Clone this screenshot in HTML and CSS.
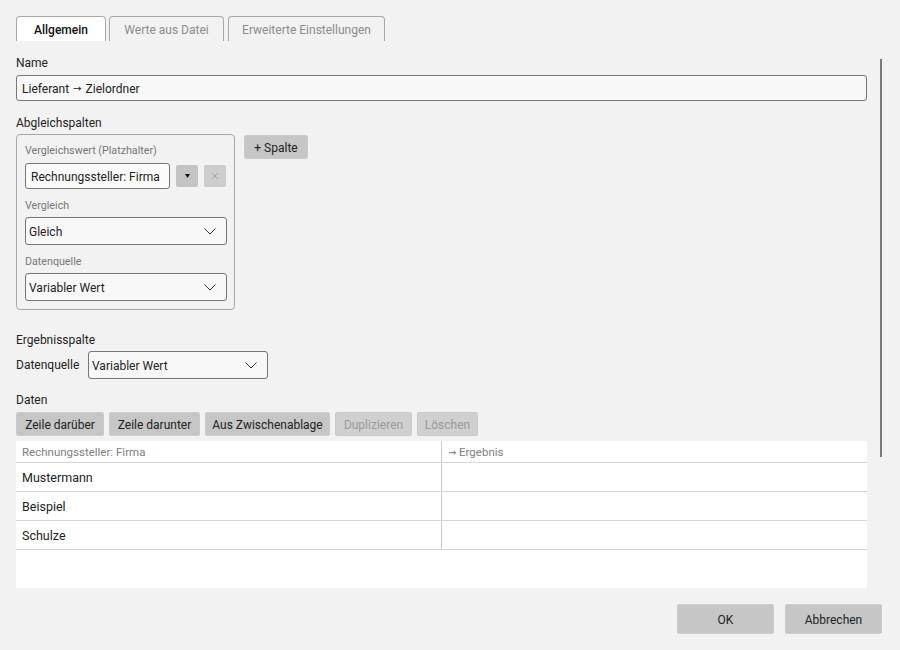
FILE: index.html
```html
<!DOCTYPE html>
<html lang="de">
<head>
    <meta charset="UTF-8">
    <meta name="viewport" content="width=device-width, initial-scale=1.0">
    <title>Zuordnung bearbeiten</title>
    <link rel="stylesheet" href="styles.css">
</head>
<body>
    <div class="dialog">
        <div class="tabs">
            <div class="tab tab-active">Allgemein</div>
            <div class="tab tab-file">Werte aus Datei</div>
            <div class="tab tab-advanced">Erweiterte Einstellungen</div>
        </div>

        <div class="body">
            <div class="content">
                <label class="label label-name">Name</label>
                <div class="input input-name">Lieferant <span class="arrow">→</span> Zielordner</div>

                <label class="label label-section">Abgleichspalten</label>
                <div class="match-row">
                    <div class="group">
                        <div class="small-label small-label-first">Vergleichswert (Platzhalter)</div>
                        <div class="placeholder-row">
                            <div class="input input-placeholder">Rechnungssteller: Firma</div>
                            <button class="icon-btn">
                                <svg width="5" height="4" viewBox="0 0 5 4"><path d="M0 0H5L2.5 4Z" fill="#111"/></svg>
                            </button>
                            <button class="icon-btn icon-btn-disabled">
                                <svg width="6" height="6" viewBox="0 0 6 6"><path d="M0.5 0.5L5.5 5.5M5.5 0.5L0.5 5.5" stroke="#999" stroke-width="0.8"/></svg>
                            </button>
                        </div>

                        <div class="small-label">Vergleich</div>
                        <div class="select select-group">
                            <span>Gleich</span>
                            <svg class="chevron" width="12" height="7" viewBox="0 0 12 7"><path d="M0.5 0.5L6 6L11.5 0.5" fill="none" stroke="#333" stroke-width="1"/></svg>
                        </div>

                        <div class="small-label">Datenquelle</div>
                        <div class="select select-group">
                            <span>Variabler Wert</span>
                            <svg class="chevron" width="12" height="7" viewBox="0 0 12 7"><path d="M0.5 0.5L6 6L11.5 0.5" fill="none" stroke="#333" stroke-width="1"/></svg>
                        </div>
                    </div>
                    <button class="btn btn-add">+ Spalte</button>
                </div>

                <label class="label label-result">Ergebnisspalte</label>
                <div class="result-row">
                    <span class="inline-label">Datenquelle</span>
                    <div class="select select-result">
                        <span>Variabler Wert</span>
                        <svg class="chevron" width="12" height="7" viewBox="0 0 12 7"><path d="M0.5 0.5L6 6L11.5 0.5" fill="none" stroke="#333" stroke-width="1"/></svg>
                    </div>
                </div>

                <label class="label label-data">Daten</label>
                <div class="toolbar">
                    <button class="btn btn-above">Zeile darüber</button>
                    <button class="btn btn-below">Zeile darunter</button>
                    <button class="btn btn-paste">Aus Zwischenablage</button>
                    <button class="btn btn-disabled btn-dup">Duplizieren</button>
                    <button class="btn btn-disabled btn-del">Löschen</button>
                </div>

                <div class="grid">
                    <div class="grid-row grid-head">
                        <div class="cell">Rechnungssteller: Firma</div>
                        <div class="cell"><span class="arrow">→</span>&nbsp;Ergebnis</div>
                    </div>
                    <div class="grid-row">
                        <div class="cell">Mustermann</div>
                        <div class="cell"></div>
                    </div>
                    <div class="grid-row">
                        <div class="cell">Beispiel</div>
                        <div class="cell"></div>
                    </div>
                    <div class="grid-row">
                        <div class="cell">Schulze</div>
                        <div class="cell"></div>
                    </div>
                </div>
            </div>
            <div class="scroll-rail"></div>
        </div>

        <div class="footer">
            <button class="btn btn-footer">OK</button>
            <button class="btn btn-footer">Abbrechen</button>
        </div>
    </div>
</body>
</html>
```

FILE: styles.css
```css
body {
    margin: 0;
    background-color: #f2f2f2;
    font-family: Roboto, "Open Sans", sans-serif;
    font-size: 12px;
    color: #222;
}
.dialog {
    padding: 16px 18px 0 16px;
    height: 650px;
    box-sizing: border-box;
    display: flex;
    flex-direction: column;
}
.arrow {
    font-family: "DejaVu Sans", sans-serif;
    font-size: 0.85em;
}
.tabs {
    display: flex;
    gap: 3px;
    height: 25px;
}
.tab {
    box-sizing: border-box;
    height: 25px;
    border: 1px solid #a8a8a8;
    border-bottom: none;
    border-radius: 4px 4px 0 0;
    color: #8c8c8c;
    display: flex;
    align-items: center;
    justify-content: center;
    padding-top: 2px;
}
.tab-active {
    background: #fff;
    color: #111;
    font-weight: 500;
    width: 90px;
}
.tab-file {
    width: 115px;
}
.tab-advanced {
    width: 157px;
    margin-left: 1px;
}
.body {
    display: flex;
    gap: 13px;
}
.content {
    width: 851px;
    display: flex;
    flex-direction: column;
}
.scroll-rail {
    width: 2px;
    height: 398px;
    margin-top: 18px;
    background: #7a7a7a;
}
.label {
    display: block;
    height: 16px;
    line-height: 16px;
}
.label-name {
    margin-top: 14px;
    margin-bottom: 4px;
}
.label-section {
    margin-top: 14px;
    margin-bottom: 3px;
}
.label-result {
    margin-top: 22px;
    margin-bottom: 3px;
}
.label-data {
    margin-top: 13px;
    margin-bottom: 4px;
}
.input {
    box-sizing: border-box;
    border: 1px solid #777;
    border-radius: 3px;
    background: #f8f8f8;
    display: flex;
    align-items: center;
    gap: 4px;
    padding: 1px 5px 0;
    white-space: nowrap;
}
.input-name {
    height: 26px;
}
.match-row {
    display: flex;
    align-items: flex-start;
    gap: 9px;
}
.group {
    box-sizing: border-box;
    width: 219px;
    height: 176px;
    border: 1px solid #a8a8a8;
    border-radius: 4px;
    padding: 0 8px;
    display: flex;
    flex-direction: column;
}
.small-label {
    font-size: 10.7px;
    color: #777;
    height: 15px;
    line-height: 15px;
    margin-top: 9px;
    margin-bottom: 4px;
}
.small-label-first {
    margin-top: 8px;
    margin-bottom: 5px;
}
.placeholder-row {
    display: flex;
    align-items: center;
    gap: 6px;
}
.input-placeholder {
    width: 146px;
    height: 26px;
    background: #fbfbfb;
}
.icon-btn {
    width: 22px;
    height: 22px;
    border: none;
    border-radius: 2px;
    background: #c4c4c4;
    padding: 0;
    display: flex;
    align-items: center;
    justify-content: center;
}
.icon-btn-disabled {
    background: #cdcdcd;
}
.select {
    box-sizing: border-box;
    height: 28px;
    border: 1px solid #777;
    border-radius: 3px;
    background: #f8f8f8;
    display: flex;
    align-items: center;
    justify-content: space-between;
    padding: 1px 10px 0 3px;
}
.select-group {
    width: 202px;
}
.select-result {
    width: 180px;
}
.result-row {
    display: flex;
    align-items: center;
    gap: 5px;
}
.inline-label {
    width: 67px;
}
.btn {
    font-family: inherit;
    font-size: 12px;
    color: #222;
    background: #c6c6c6;
    border: 1px solid #cbcbcb;
    border-radius: 2px;
    height: 24px;
    padding: 1px 0 0;
    cursor: pointer;
}
.btn-disabled {
    background: #d0d0d0;
    color: #9a9a9a;
}
.btn-add {
    margin-top: 1px;
    width: 64px;
}
.toolbar {
    display: flex;
    gap: 5px;
}
.btn-above {
    width: 88px;
}
.btn-below {
    width: 91px;
}
.btn-paste {
    width: 125px;
}
.btn-dup {
    width: 77px;
}
.btn-del {
    width: 61px;
}
.grid {
    margin-top: 5px;
    height: 147px;
    background: #fff;
}
.grid-row {
    display: grid;
    grid-template-columns: 425px 1fr;
    height: 29px;
    border-bottom: 1px solid #d6d6d6;
    box-sizing: border-box;
    font-size: 12.5px;
}
.grid-head {
    height: 22px;
    font-size: 11.5px;
    color: #808080;
}
.cell {
    display: flex;
    align-items: center;
    padding: 1px 6px 0;
}
.cell + .cell {
    border-left: 1px solid #c8c8c8;
}
.footer {
    margin-top: auto;
    margin-bottom: 16px;
    display: flex;
    justify-content: flex-end;
    gap: 11px;
}
.btn-footer {
    width: 97px;
    height: 30px;
}
```
